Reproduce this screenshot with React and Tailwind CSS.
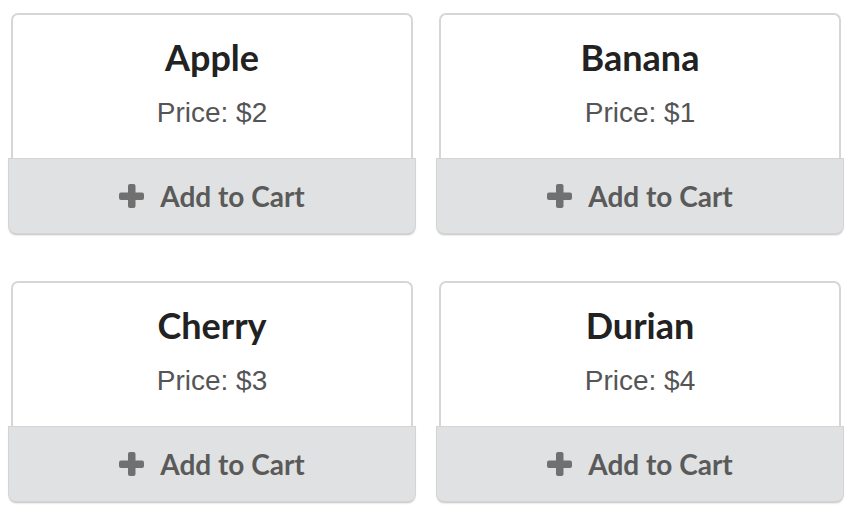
const fruits = [
  { name: "Apple", price: 2 },
  { name: "Banana", price: 1 },
  { name: "Cherry", price: 3 },
  { name: "Durian", price: 4 },
];

const PlusIcon = () => (
  <svg width="25" height="24" viewBox="0 0 25 24" className="shrink-0">
    <rect x="9" y="0" width="7.5" height="24" rx="2" fill="#707070" />
    <rect x="0" y="8.5" width="25" height="7.5" rx="2" fill="#707070" />
  </svg>
);

const FruitCard = ({ fruit }) => {
  return (
    <div className="flex flex-col">

      {/* Content */}
      <div className="mx-[2px] h-[146px] border-2 border-b-0 border-[#d6d6d7] rounded-t-[7px] bg-white pt-[24px] text-center">
        <h2 className="text-[36px] leading-none font-bold text-[#222222] font-['Lato',sans-serif]">
          {fruit.name}
        </h2>
        <p className="mt-[18px] text-[28px] leading-[40px] text-[#555555] font-['Liberation_Sans',Arial,sans-serif]">
          Price: ${fruit.price}
        </p>
      </div>

      {/* Button */}
      <button
        className="
          h-[74px]
          flex items-center justify-center gap-[16px]
          bg-[#e0e1e2]
          rounded-b-[7px]
          shadow-[0_0_0_1px_#d4d4d5,0_2px_2px_0_#bfbfc0]
          text-[28px] leading-none font-bold text-[#5a5a5a]
          font-['Lato',sans-serif]
        "
      >
        <PlusIcon />
        <span>Add to Cart</span>
      </button>

    </div>
  );
};

export default function App() {
  return (
    <div className="w-[858px] h-[516px] bg-white pt-[13px] pl-[9px]">
      <div className="grid grid-cols-[406px_406px] gap-x-[22px] gap-y-[48px]">
        {fruits.map((fruit) => (
          <FruitCard key={fruit.name} fruit={fruit} />
        ))}
      </div>
    </div>
  );
}
